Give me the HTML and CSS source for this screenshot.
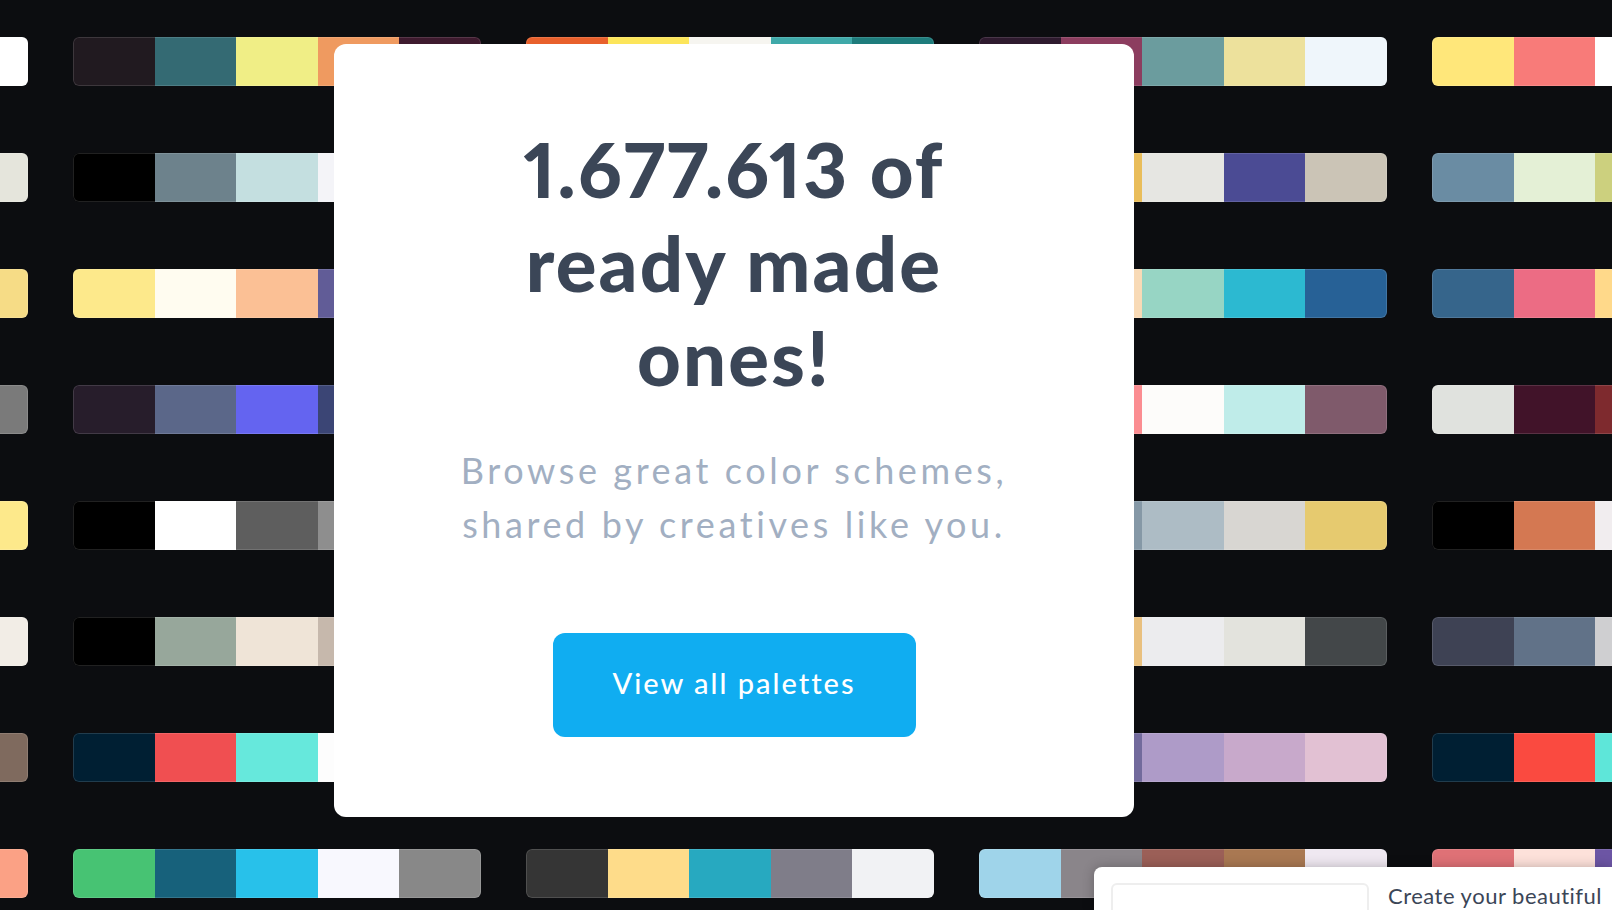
FILE: index.html
```html
<!DOCTYPE html>
<html lang="en">
<head>
<meta charset="utf-8">
<title>Palettes</title>
<link rel="stylesheet" href="styles.css">
</head>
<body>
<div class="wall">
  <div class="grid">
    <!-- row 1 -->
    <div class="pal"><i style="background:#c9c9c9"></i><i style="background:#8a8a8a"></i><i style="background:#444"></i><i style="background:#ddd"></i><i style="background:#ffffff"></i></div>
    <div class="pal"><i style="background:#211a20"></i><i style="background:#346a73"></i><i style="background:#f0ee86"></i><i style="background:#ef9a60"></i><i style="background:#3e1a2e"></i></div>
    <div class="pal"><i style="background:#e8602c"></i><i style="background:#fce55a"></i><i style="background:#f6f5f0"></i><i style="background:#3fa9a9"></i><i style="background:#1e7c7c"></i></div>
    <div class="pal"><i style="background:#2e1a2e"></i><i style="background:#8c3d5f"></i><i style="background:#6b9c9e"></i><i style="background:#ede19c"></i><i style="background:#eff6fb"></i></div>
    <div class="pal"><i style="background:#ffe77a"></i><i style="background:#f87b79"></i><i style="background:#ffffff"></i><i style="background:#eee"></i><i style="background:#ccc"></i></div>
    <!-- row 2 -->
    <div class="pal"><i style="background:#333"></i><i style="background:#777"></i><i style="background:#aaa"></i><i style="background:#ccc"></i><i style="background:#e5e5dc"></i></div>
    <div class="pal"><i style="background:#000000"></i><i style="background:#6d828c"></i><i style="background:#c4dfe0"></i><i style="background:#f4f4f8"></i><i style="background:#d0d0d0"></i></div>
    <div class="pal"><i style="background:#555"></i><i style="background:#999"></i><i style="background:#ddd"></i><i style="background:#bbb"></i><i style="background:#777"></i></div>
    <div class="pal"><i style="background:#2b2b3a"></i><i style="background:#e9bd5a"></i><i style="background:#e6e6e2"></i><i style="background:#4b4b94"></i><i style="background:#cbc4b6"></i></div>
    <div class="pal"><i style="background:#6a8ca3"></i><i style="background:#e4f0d6"></i><i style="background:#ccd07e"></i><i style="background:#999"></i><i style="background:#666"></i></div>
    <!-- row 3 -->
    <div class="pal"><i style="background:#333"></i><i style="background:#777"></i><i style="background:#aaa"></i><i style="background:#ccc"></i><i style="background:#f6dc86"></i></div>
    <div class="pal"><i style="background:#fde98b"></i><i style="background:#fffcf0"></i><i style="background:#fbc095"></i><i style="background:#615c97"></i><i style="background:#333"></i></div>
    <div class="pal"><i style="background:#555"></i><i style="background:#999"></i><i style="background:#ddd"></i><i style="background:#bbb"></i><i style="background:#777"></i></div>
    <div class="pal"><i style="background:#444"></i><i style="background:#f8dab6"></i><i style="background:#97d5c4"></i><i style="background:#2cb9d1"></i><i style="background:#276196"></i></div>
    <div class="pal"><i style="background:#36658b"></i><i style="background:#ec6c84"></i><i style="background:#ffd98a"></i><i style="background:#999"></i><i style="background:#666"></i></div>
    <!-- row 4 -->
    <div class="pal"><i style="background:#333"></i><i style="background:#555"></i><i style="background:#aaa"></i><i style="background:#ccc"></i><i style="background:#7a7a7a"></i></div>
    <div class="pal"><i style="background:#271d2b"></i><i style="background:#5b6789"></i><i style="background:#6464f0"></i><i style="background:#3b4575"></i><i style="background:#222"></i></div>
    <div class="pal"><i style="background:#555"></i><i style="background:#999"></i><i style="background:#ddd"></i><i style="background:#bbb"></i><i style="background:#777"></i></div>
    <div class="pal"><i style="background:#444"></i><i style="background:#fb8d91"></i><i style="background:#fdfcfa"></i><i style="background:#bfece9"></i><i style="background:#7f5a6b"></i></div>
    <div class="pal"><i style="background:#e0e2de"></i><i style="background:#411329"></i><i style="background:#7e2a2e"></i><i style="background:#999"></i><i style="background:#666"></i></div>
    <!-- row 5 -->
    <div class="pal"><i style="background:#333"></i><i style="background:#777"></i><i style="background:#aaa"></i><i style="background:#ccc"></i><i style="background:#fde98b"></i></div>
    <div class="pal"><i style="background:#000000"></i><i style="background:#ffffff"></i><i style="background:#5e5e5e"></i><i style="background:#8e8e8e"></i><i style="background:#ccc"></i></div>
    <div class="pal"><i style="background:#555"></i><i style="background:#999"></i><i style="background:#ddd"></i><i style="background:#bbb"></i><i style="background:#777"></i></div>
    <div class="pal"><i style="background:#444"></i><i style="background:#8598a6"></i><i style="background:#adbcc5"></i><i style="background:#d8d6d2"></i><i style="background:#e6ca6f"></i></div>
    <div class="pal"><i style="background:#000000"></i><i style="background:#d47852"></i><i style="background:#f1edef"></i><i style="background:#999"></i><i style="background:#666"></i></div>
    <!-- row 6 -->
    <div class="pal"><i style="background:#333"></i><i style="background:#777"></i><i style="background:#aaa"></i><i style="background:#ccc"></i><i style="background:#f2ede6"></i></div>
    <div class="pal"><i style="background:#000000"></i><i style="background:#97a79b"></i><i style="background:#efe4d7"></i><i style="background:#c6b8ac"></i><i style="background:#888"></i></div>
    <div class="pal"><i style="background:#555"></i><i style="background:#999"></i><i style="background:#ddd"></i><i style="background:#bbb"></i><i style="background:#777"></i></div>
    <div class="pal"><i style="background:#444"></i><i style="background:#e9c07e"></i><i style="background:#ececee"></i><i style="background:#e3e3dd"></i><i style="background:#434749"></i></div>
    <div class="pal"><i style="background:#3e4254"></i><i style="background:#617288"></i><i style="background:#cfcfd1"></i><i style="background:#999"></i><i style="background:#666"></i></div>
    <!-- row 7 -->
    <div class="pal"><i style="background:#333"></i><i style="background:#777"></i><i style="background:#aaa"></i><i style="background:#ccc"></i><i style="background:#7f6a5e"></i></div>
    <div class="pal"><i style="background:#001f33"></i><i style="background:#f04f51"></i><i style="background:#66e8dc"></i><i style="background:#fdfdfd"></i><i style="background:#ccc"></i></div>
    <div class="pal"><i style="background:#555"></i><i style="background:#999"></i><i style="background:#ddd"></i><i style="background:#bbb"></i><i style="background:#777"></i></div>
    <div class="pal"><i style="background:#444"></i><i style="background:#726a9c"></i><i style="background:#ae9bc8"></i><i style="background:#c8a9cb"></i><i style="background:#e2c1d3"></i></div>
    <div class="pal"><i style="background:#001f33"></i><i style="background:#fa4a40"></i><i style="background:#5ee6d9"></i><i style="background:#999"></i><i style="background:#666"></i></div>
    <!-- row 8 -->
    <div class="pal"><i style="background:#333"></i><i style="background:#777"></i><i style="background:#aaa"></i><i style="background:#ccc"></i><i style="background:#fba185"></i></div>
    <div class="pal"><i style="background:#47c373"></i><i style="background:#17617b"></i><i style="background:#28c1ea"></i><i style="background:#f8f8fe"></i><i style="background:#888888"></i></div>
    <div class="pal"><i style="background:#353535"></i><i style="background:#fedc8a"></i><i style="background:#27a9c0"></i><i style="background:#7f7d89"></i><i style="background:#f1f2f4"></i></div>
    <div class="pal"><i style="background:#9fd4ea"></i><i style="background:#8a858a"></i><i style="background:#9b5f57"></i><i style="background:#a97852"></i><i style="background:#efe8f1"></i></div>
    <div class="pal"><i style="background:#df7176"></i><i style="background:#fde1da"></i><i style="background:#6c55a4"></i><i style="background:#999"></i><i style="background:#666"></i></div>
  </div>

  <section class="modal">
    <h1 class="title">1.677.613 of<br>ready made<br>ones!</h1>
    <p class="lead">Browse great color schemes,<br>shared by creatives like you.</p>
    <a class="btn" href="#">View all palettes</a>
  </section>

  <aside class="toast">
    <div class="toast-field"></div>
    <span class="toast-text">Create your beautiful</span>
  </aside>
</div>
</body>
</html>
```

FILE: styles.css
```css
html, body {
  margin: 0;
  padding: 0;
  height: 100%;
  overflow: hidden;
  background: #0c0d10;
}

.wall {
  position: relative;
  width: 1612px;
  height: 910px;
  overflow: hidden;
  background: #0c0d10;
}

.grid {
  display: grid;
  grid-template-columns: repeat(5, 408px);
  grid-auto-rows: 49px;
  column-gap: 45px;
  row-gap: 67px;
  margin-left: -380px;
  padding-top: 37px;
}

.pal {
  position: relative;
  display: flex;
  border-radius: 6px;
  overflow: hidden;
}

.pal::after {
  content: "";
  position: absolute;
  inset: 0;
  border-radius: 6px;
  box-shadow: inset 0 0 0 1px rgba(255, 255, 255, 0.13);
  pointer-events: none;
}

.pal i {
  flex: 1 1 0;
  display: block;
}

.modal {
  position: absolute;
  left: 334px;
  top: 44px;
  width: 800px;
  box-sizing: border-box;
  padding: 78px 0 80px;
  background: #ffffff;
  border-radius: 12px;
  display: flex;
  flex-direction: column;
  align-items: center;
  text-align: center;
}

.title {
  margin: 0;
  font-family: "Lato", "Open Sans", sans-serif;
  font-weight: 900;
  font-size: 76px;
  line-height: 94px;
  color: #3b4657;
  letter-spacing: 2.2px;
  font-variant-numeric: proportional-nums;
}

.lead {
  margin: 39px 0 0;
  font-family: "Lato", "Open Sans", sans-serif;
  font-weight: 400;
  font-size: 36px;
  line-height: 54px;
  color: #a2afc2;
  letter-spacing: 3.6px;
}

.btn {
  margin-top: 82px;
  width: 363px;
  height: 104px;
  box-sizing: border-box;
  padding-bottom: 5px;
  display: flex;
  align-items: center;
  justify-content: center;
  background: #10adf1;
  border-radius: 12px;
  color: #ffffff;
  text-decoration: none;
  font-family: "Lato", "Open Sans", sans-serif;
  font-weight: 500;
  font-size: 29px;
  letter-spacing: 2px;
}

.toast {
  position: absolute;
  left: 1094px;
  top: 867px;
  width: 518px;
  height: 43px;
  box-sizing: border-box;
  padding: 16px 0 0 17px;
  background: #ffffff;
  border-radius: 8px 0 0 0;
  box-shadow: 0 0 12px rgba(0, 0, 0, 0.25);
  display: flex;
  align-items: flex-start;
  gap: 19px;
  overflow: hidden;
}

.toast-field {
  width: 258px;
  height: 40px;
  box-sizing: border-box;
  border: 2px solid #eeeeee;
  border-radius: 6px;
  flex: none;
}

.toast-text {
  margin-top: 2px;
  font-family: "Lato", "Open Sans", sans-serif;
  font-size: 22px;
  line-height: 22px;
  color: #3b4657;
  letter-spacing: 0.5px;
  white-space: nowrap;
}
```
